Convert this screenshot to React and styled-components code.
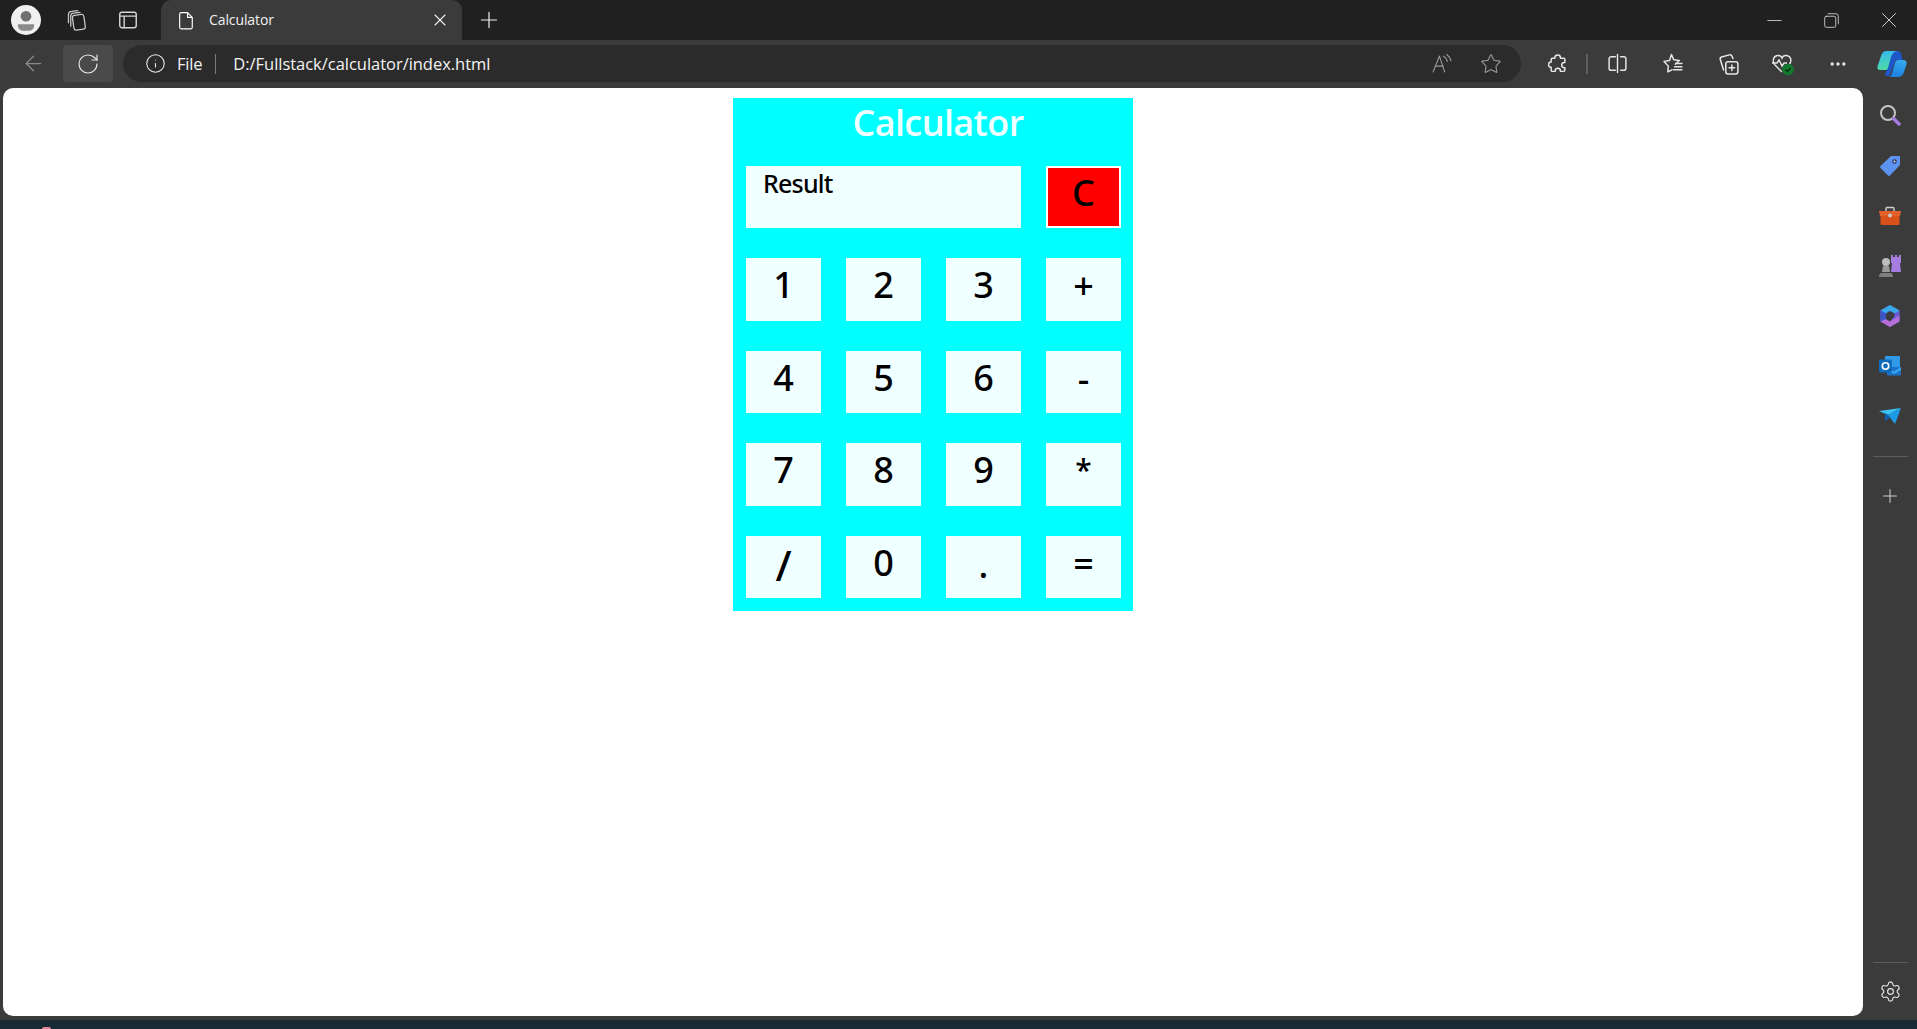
import styled, { createGlobalStyle } from "styled-components";
import { ArrowLeft, RotateCw, Info, Star, Plus, X, Minus, Settings, Ellipsis } from "lucide-react";

const GlobalStyle = createGlobalStyle`
  html, body {
    margin: 0;
    padding: 0;
    height: 100%;
    overflow: hidden;
    background-color: #3b3b3b;
  }
  * {
    box-sizing: border-box;
  }
`;

const Browser = styled.div`
  display: flex;
  flex-direction: column;
  height: 1029px;
  width: 1917px;
  font-family: "Open Sans", "Noto Sans", sans-serif;
  color: #ffffff;
`;

const TitleBar = styled.div`
  align-items: center;
  background-color: #202020;
  display: flex;
  flex: 0 0 40px;
  padding-left: 6px;
`;

const TitleIcon = styled.div`
  align-items: center;
  display: flex;
  flex: 0 0 ${(props) => props.$width || 47}px;
  height: 40px;
  justify-content: center;
  color: ${(props) => props.$color || "#e4e4e4"};
`;

const Tab = styled.div`
  align-items: center;
  background-color: #3b3b3b;
  border-radius: 10px 10px 0 0;
  display: flex;
  flex: 0 0 301px;
  height: 40px;
  margin-left: 11px;
  padding: 0 12px 0 15px;
`;

const TabTitle = styled.span`
  flex: 1;
  font-size: 14px;
  color: #f0f0f0;
  margin: 0 0 2px 12px;
  letter-spacing: -0.1px;
`;

const WindowControls = styled.div`
  display: flex;
  margin-left: auto;
`;

const WindowButton = styled.div`
  align-items: center;
  color: #e8e8e8;
  display: flex;
  height: 40px;
  justify-content: center;
  width: 57px;
`;

const Toolbar = styled.div`
  align-items: center;
  background-color: #3b3b3b;
  display: flex;
  flex: 0 0 48px;
  padding: 2px 0 3px 10px;
`;

const ToolButton = styled.div`
  align-items: center;
  background-color: ${(props) => (props.$active ? "#4a4a4a" : "transparent")};
  border-radius: 4px;
  color: ${(props) => props.$color || "#e6e6e6"};
  display: flex;
  flex: 0 0 ${(props) => props.$width || 46}px;
  height: 37px;
  justify-content: center;
  margin-left: ${(props) => props.$left || 0}px;
`;

const AddressBar = styled.div`
  align-items: center;
  background-color: #2b2b2b;
  border-radius: 19px;
  display: flex;
  flex: 0 0 1398px;
  height: 37px;
  margin-left: 10px;
  padding: 0 5px 0 22px;
`;

const SiteLabel = styled.span`
  font-size: 16.5px;
  color: #f2f2f2;
  margin-left: 11px;
  letter-spacing: -0.2px;
`;

const Divider = styled.span`
  background-color: #7a7a7a;
  flex: 0 0 1px;
  height: 20px;
  margin: 0 17px 0 13px;
`;

const Url = styled.span`
  flex: 1;
  font-size: 16.5px;
  color: #f4f4f4;
  letter-spacing: -0.03px;
`;

const AddressAction = styled.div`
  align-items: center;
  color: #9a9a9a;
  display: flex;
  flex: 0 0 50px;
  justify-content: center;
`;

const ToolSeparator = styled.span`
  background-color: #5f5f5f;
  flex: 0 0 2px;
  height: 20px;
  margin: 0 6px;
`;

const Main = styled.div`
  display: flex;
  flex: 1;
  min-height: 0;
  padding-left: 3px;
`;

const Page = styled.main`
  background-color: #ffffff;
  border-radius: 10px;
  flex: 0 0 1860px;
  padding-top: 10px;
`;

const Sidebar = styled.aside`
  display: flex;
  flex: 1;
  flex-direction: column;
  align-items: center;
  padding-top: 3px;
`;

const SideSlot = styled.div`
  align-items: center;
  color: #cfcfcf;
  display: flex;
  flex: 0 0 50px;
  justify-content: center;
  padding-bottom: ${(props) => props.$lift || 0}px;
  width: 100%;
`;

const SideRule = styled.div`
  background-color: #5c5c5c;
  flex: 0 0 1px;
  margin: ${(props) => props.$margin};
  width: 35px;
`;

const Footer = styled.div`
  background-color: #182a33;
  border-top: 4px solid #3b3b3b;
  flex: 0 0 13px;
  position: relative;
`;

const TaskbarPeek = styled.span`
  background-color: #e8829a;
  border-radius: 6px 6px 0 0;
  height: 2px;
  left: 42px;
  position: absolute;
  top: 7px;
  width: 9px;
`;

const Calculator = styled.section`
  background-color: #00ffff;
  height: 513px;
  margin: 0 auto;
  padding: 0 13px;
  width: 400px;
`;

const Heading = styled.h1`
  color: #f0ffff;
  font-size: 36px;
  font-weight: 600;
  height: 67.6px;
  letter-spacing: -0.6px;
  line-height: 50px;
  margin: 0;
  padding-left: 10px;
  text-align: center;
`;

const Keypad = styled.div`
  display: grid;
  gap: 30px 25px;
  grid-template-columns: repeat(4, 75px);
  grid-auto-rows: 62.5px;
`;

const Display = styled.div`
  background-color: #f0ffff;
  color: #000000;
  font-family: "Noto Sans", sans-serif;
  font-size: 25px;
  font-weight: 500;
  grid-column: span 3;
  letter-spacing: -0.8px;
  line-height: 34px;
  padding-left: 17px;
`;

const Key = styled.button`
  background-color: #f0ffff;
  border: none;
  color: #000000;
  font-family: "Noto Sans", sans-serif;
  font-size: ${(props) => props.$size || 36}px;
  font-weight: 500;
  line-height: 50px;
  padding: 0 0 ${(props) => props.$lift || 8}px;
`;

const ClearKey = styled(Key)`
  background-color: #ff0000;
  border: 2px solid #ffffff;
  font-size: 36px;
  padding-bottom: 10px;
`;

const Stroke = ({ size = 20, children, width = 1.4 }) => (
  <svg width={size} height={size} viewBox="0 0 20 20" fill="none" stroke="currentColor" strokeWidth={width} strokeLinecap="round" strokeLinejoin="round">
    {children}
  </svg>
);

const Avatar = () => (
  <svg width="30" height="30" viewBox="0 0 28 28">
    <circle cx="14" cy="14" r="14" fill="#f0f0f0" />
    <circle cx="14" cy="10.5" r="5" fill="#707070" />
    <path d="M6.5 18h15v1.5a5 5 0 0 1-5 4.5h-5a5 5 0 0 1-5-4.5z" fill="#8a8a8a" />
  </svg>
);

const CopilotLogo = () => (
  <svg width="32" height="28" viewBox="0 0 30 28">
    <defs>
      <linearGradient id="copA" x1="0.3" y1="0" x2="0.5" y2="1">
        <stop offset="0" stopColor="#35b8f1" />
        <stop offset="1" stopColor="#4fdca0" />
      </linearGradient>
      <linearGradient id="copB" x1="0.6" y1="0" x2="0.3" y2="1">
        <stop offset="0" stopColor="#35a8ee" />
        <stop offset="1" stopColor="#1b7fe0" />
      </linearGradient>
    </defs>
    <path d="M20 1c2.500 0 4 1.500 4.500 4l1 5h-7l-6 16H8l5-20c.8-3 3-5 7-5z" fill="#1d57c8" />
    <path d="M9 1h11c-3 .5-5 2.500-6 6l-3 11c-.5 1.500-1.500 2-3 2H3c-2 0-3-1.500-2.500-3.500L4 6c1-3.500 3-5 5-5z" fill="url(#copA)" />
    <path d="M12 27h9c3 0 5-2 6-5l2.500-8c.5-2-.5-4-3-4h-5c-2 0-3 1-3.500 2.500L15 23c-.5 2-1 3.500-3 4z" fill="url(#copB)" />
  </svg>
);

const TagIcon = () => (
  <svg width="22" height="22" viewBox="0 0 22 22">
    <path d="M12 1h8c.6 0 1 .4 1 1v8l-10 10.500a1.500 1.500 0 0 1-2 0L1.500 13a1.500 1.500 0 0 1 0-2z" fill="#5b93ee" />
    <circle cx="15.500" cy="6.500" r="2.200" fill="#23345c" />
    <circle cx="15.500" cy="6.500" r="1" fill="#e8eefc" />
  </svg>
);

const ToolboxIcon = () => (
  <svg width="22" height="20" viewBox="0 0 22 20">
    <path d="M7 5V2.500C7 2 7.500 1.500 8 1.500h6c.5 0 1 .5 1 1V5" fill="none" stroke="#cfcfcf" strokeWidth="1.400" />
    <path d="M0 5h22l-1 5H1z" fill="#e2602a" />
    <path d="M1.500 10h19v8c0 .6-.4 1-1 1h-17c-.6 0-1-.4-1-1z" fill="#d8501a" />
    <circle cx="11" cy="9.500" r="2" fill="#c9c9c9" />
  </svg>
);

const ChessIcon = () => (
  <svg width="22" height="24" viewBox="0 0 22 24">
    <path d="M12 1h2v2h2V1h2v2h2V1h2v8h-1l1 9H12l1-9h-1z" fill="#a77ce0" />
    <circle cx="7" cy="8" r="4" fill="#bdbdbd" />
    <path d="M4 12h6l1 6H3z" fill="#9a9a9a" />
    <path d="M0 23c0-3 1-4 3-4h8c2 0 3 1 3 4z" fill="#7f7f7f" />
  </svg>
);

const SideCopilot = () => (
  <svg width="22" height="24" viewBox="0 0 22 24">
    <path d="M11 1l9.500 5.500v11L11 23l-9.500-5.500v-11z" fill="#6a5bd8" />
    <path d="M1.500 6.500L11 1l9.500 5.500-5 3L11 7l-4 2.500z" fill="#38a8e8" />
    <path d="M1.500 6.500l5.500 3v6l-5.500 2z" fill="#3a55c8" />
    <path d="M1.500 17.500L7 15l4 2.500 9.500-6v6L11 23z" fill="#b66fd8" />
    <path d="M7 9.500L11 7l4.500 2.500-4.500 2z" fill="#3b3b3b" />
    <path d="M7 9.500l4 2 4.500-2V12L11 17.500 7 15z" fill="#3b3b3b" />
  </svg>
);

const OutlookIcon = () => (
  <svg width="22" height="20" viewBox="0 0 22 20">
    <rect x="6" y="0" width="15" height="13" rx="1" fill="#2f9be8" />
    <path d="M8 11h14v7c0 1-.6 1.500-1.500 1.500H9.500C8.600 19.500 8 19 8 18z" fill="#1a73c8" />
    <path d="M8 11l7 4.500 7-4.500v3l-7 4-7-4z" fill="#38a8f0" />
    <rect x="0" y="3.500" width="13" height="13" rx="1.500" fill="#0f6cbd" />
    <circle cx="6.500" cy="10" r="3.200" fill="none" stroke="#ffffff" strokeWidth="1.600" />
  </svg>
);

const SendIcon = () => (
  <svg width="22" height="16" viewBox="0 0 22 16">
    <path d="M0 3l22-3L9 7z" fill="#3cc4f4" />
    <path d="M22 0l-6 16-7-9z" fill="#1e9be8" />
    <path d="M6 5l3 2 2 2.500L6 13z" fill="#0f62b0" />
  </svg>
);

const HealthIcon = () => (
  <svg width="24" height="24" viewBox="0 0 24 24" fill="none">
    <path d="M11 20l-7-7c-3-3-2-9 2.500-9.500C9 3.300 10.500 4.500 11 6c.5-1.500 2-2.700 4.500-2.500C20 4 21 9 18.500 12" stroke="#e6e6e6" strokeWidth="1.400" />
    <path d="M1 11h5l2-3 3 6 2-3h3" stroke="#e6e6e6" strokeWidth="1.400" />
    <circle cx="17" cy="17.500" r="5.800" fill="#127a2c" />
    <path d="M14.500 17.500l2 2 3-3.500" stroke="#07300f" strokeWidth="1.400" />
  </svg>
);

const keys = [
  { label: "1" }, { label: "2" }, { label: "3" }, { label: "+", lift: 6 },
  { label: "4" }, { label: "5" }, { label: "6" }, { label: "-", lift: 6 },
  { label: "7" }, { label: "8" }, { label: "9" }, { label: "*", lift: 9, size: 30 },
  { label: "/", lift: 4, size: 42 }, { label: "0" }, { label: ".", lift: 4 }, { label: "=", lift: 6 },
];

function App() {
  return (
    <Browser>
      <GlobalStyle />
      <TitleBar>
        <TitleIcon $width={40}>
          <Avatar />
        </TitleIcon>
        <TitleIcon $width={60} $color="#c8c8c8">
          <Stroke size={23} width={1.1}>
            <rect x="7" y="5" width="10" height="13" rx="2" transform="rotate(-8 12 11)" />
            <path d="M5 15V6c0-1.500 1-2.500 2.500-2.500L13 3M3 12V5c0-2 1-3 3-3l5-.5" />
          </Stroke>
        </TitleIcon>
        <TitleIcon $width={44} $color="#d4d4d4">
          <Stroke size={22} width={1.3}>
            <rect x="2.500" y="3" width="15" height="14" rx="2" />
            <path d="M2.500 6.500h15M6.500 6.500V17" />
          </Stroke>
        </TitleIcon>
        <Tab>
          <Stroke size={21} width={1.1}>
            <path d="M5 2.500h6l4.500 4.500v9.500a1.500 1.500 0 0 1-1.500 1.500H5a1.500 1.500 0 0 1-1.500-1.500V4A1.500 1.500 0 0 1 5 2.500zM11 2.500V7h4.500" />
          </Stroke>
          <TabTitle>Calculator</TabTitle>
          <X size={20} strokeWidth={1.3} color="#eeeeee" />
        </Tab>
        <TitleIcon $width={54} $color="#f0f0f0">
          <Plus size={26} strokeWidth={1.1} />
        </TitleIcon>
        <WindowControls>
          <WindowButton>
            <Minus size={23} strokeWidth={0.8} />
          </WindowButton>
          <WindowButton>
            <Stroke size={17} width={0.9}>
              <rect x="2" y="5" width="13" height="13" rx="2" />
              <path d="M6 2h9a3 3 0 0 1 3 3v9" />
            </Stroke>
          </WindowButton>
          <WindowButton>
            <X size={26} strokeWidth={0.8} />
          </WindowButton>
        </WindowControls>
      </TitleBar>
      <Toolbar>
        <ToolButton $color="#8a8a8a">
          <ArrowLeft size={25} strokeWidth={1.2} />
        </ToolButton>
        <ToolButton $active $width={50} $left={7}>
          <RotateCw size={24} strokeWidth={1.2} />
        </ToolButton>
        <AddressBar>
          <Info size={21} strokeWidth={1.2} color="#f0f0f0" />
          <SiteLabel>File</SiteLabel>
          <Divider />
          <Url>D:/Fullstack/calculator/index.html</Url>
          <AddressAction>
            <Stroke size={21} width={1.1}>
              <path d="M2 18L8 3l5 15M4.500 12.500h7M12 3c2 1 3 3 3.500 5M15 1.500c2 1.500 3.500 3.500 4 6" />
            </Stroke>
          </AddressAction>
          <AddressAction>
            <Star size={22} strokeWidth={1.2} />
          </AddressAction>
        </AddressBar>
        <ToolButton $left={13}>
          <Stroke size={21}>
            <path d="M7.500 4.500C7.500 3 8.800 2 10.200 2s2.600 1 2.600 2.500V5H16a1 1 0 0 1 1 1v3h-.5c-1.500 0-2.500 1.100-2.500 2.500s1 2.500 2.500 2.500h.5v2.500a1 1 0 0 1-1 1h-3.200v-.5c0-1.500-1.100-2.500-2.500-2.500s-2.500 1-2.500 2.500v.5H5a1 1 0 0 1-1-1v-3h-.5C2 13.500 1.500 12.500 1.500 11S2.500 8.500 4 8.500V6a1 1 0 0 1 1-1h2.500z" />
          </Stroke>
        </ToolButton>
        <ToolSeparator />
        <ToolButton>
          <Stroke size={21}>
            <path d="M8 3.500H4a2 2 0 0 0-2 2v9a2 2 0 0 0 2 2h4M13 3.500h3a2 2 0 0 1 2 2v9a2 2 0 0 1-2 2h-3M10 1.500v17" />
          </Stroke>
        </ToolButton>
        <ToolButton $width={55} $left={5}>
          <Stroke size={21}>
            <path d="M9 1.500l2.300 5 5.200.6-3.800 3.600M6 12.500L5.500 18l4-2M6 12.500L2 8l5.200-.9L9 1.500M13 10h6M12 13h7M11 16h8" />
          </Stroke>
        </ToolButton>
        <ToolButton $width={55}>
          <Stroke size={22}>
            <rect x="8" y="8" width="11" height="11" rx="2" />
            <path d="M13.500 11v5M11 13.500h5M6 15.500L3 6c-.3-1 .2-2 1.200-2.300l7-2c1-.3 2 .2 2.500 1.300L14.500 5" />
          </Stroke>
        </ToolButton>
        <ToolButton $width={55}>
          <HealthIcon />
        </ToolButton>
        <ToolButton $width={55}>
          <Ellipsis size={20} strokeWidth={2} />
        </ToolButton>
        <ToolButton $width={53}>
          <CopilotLogo />
        </ToolButton>
      </Toolbar>
      <Main>
        <Page>
          <Calculator>
            <Heading>Calculator</Heading>
            <Keypad>
              <Display>Result</Display>
              <ClearKey>C</ClearKey>
              {keys.map((item) => (
                <Key key={item.label} $lift={item.lift} $size={item.size}>
                  {item.label}
                </Key>
              ))}
            </Keypad>
          </Calculator>
        </Page>
        <Sidebar>
          <SideSlot $lift={2}>
            <svg width="22" height="22" viewBox="0 0 22 22" fill="none">
              <circle cx="9" cy="9" r="7" stroke="#c4c4c4" strokeWidth="2" />
              <path d="M14.500 14.500L20 20" stroke="#a77ce0" strokeWidth="3.500" strokeLinecap="round" />
            </svg>
          </SideSlot>
          <SideSlot>
            <TagIcon />
          </SideSlot>
          <SideSlot>
            <ToolboxIcon />
          </SideSlot>
          <SideSlot>
            <ChessIcon />
          </SideSlot>
          <SideSlot>
            <SideCopilot />
          </SideSlot>
          <SideSlot>
            <OutlookIcon />
          </SideSlot>
          <SideSlot>
            <SendIcon />
          </SideSlot>
          <SideRule $margin="15px 0 14px" />
          <SideSlot>
            <Plus size={22} strokeWidth={1.1} />
          </SideSlot>
          <SideRule $margin="auto 0 3px" />
          <SideSlot>
            <Settings size={23} strokeWidth={1.2} color="#e8e8e8" />
          </SideSlot>
        </Sidebar>
      </Main>
      <Footer>
        <TaskbarPeek />
      </Footer>
    </Browser>
  );
}

export default App;
